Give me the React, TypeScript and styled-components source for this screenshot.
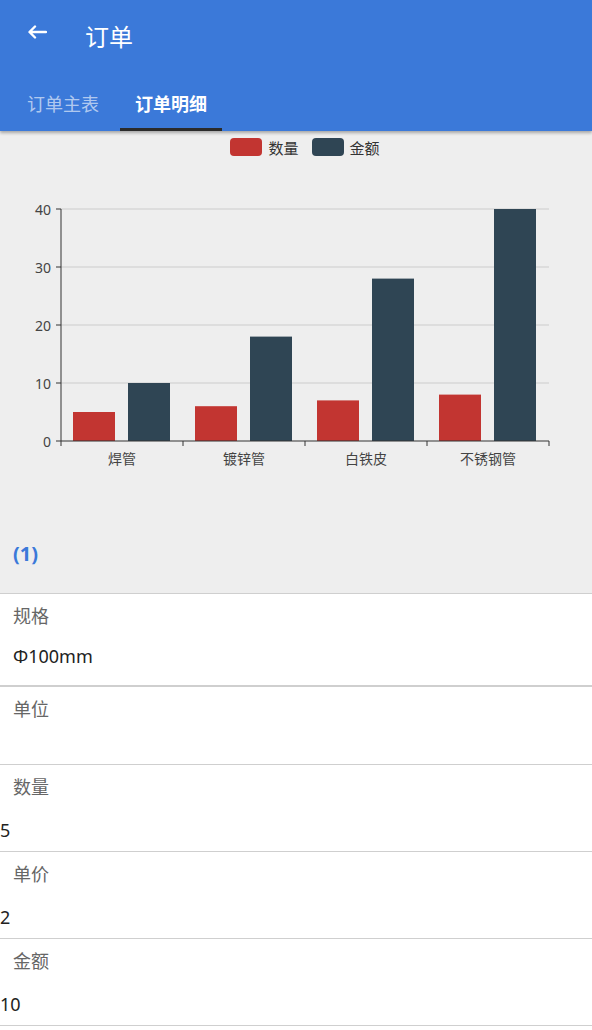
import React from 'react';
import styled, { createGlobalStyle } from 'styled-components';

const GlobalStyle = createGlobalStyle`
  html, body {
    margin: 0;
    padding: 0;
    background: #ffffff;
  }
  body {
    font-family: 'Noto Sans', 'Noto Sans CJK SC', sans-serif;
    color: #222;
  }
`;

const Page = styled.div`
  width: 592px;
  min-height: 1030px;
  background: #ffffff;
`;

const Header = styled.header`
  background: #3b79d9;
  box-shadow: 0 2px 3px rgba(0, 0, 0, 0.3);
  position: relative;
  z-index: 1;
`;

const TopBar = styled.div`
  height: 74px;
  display: flex;
  align-items: center;
  padding-left: 27px;
  gap: 38px;
`;

const BackButton = styled.button`
  border: none;
  background: none;
  padding: 0;
  width: 20px;
  height: 14px;
  margin-bottom: 10px;
  display: flex;
  align-items: center;
  cursor: pointer;
`;

const Title = styled.h1`
  margin: 0;
  font-size: 24px;
  font-weight: 400;
  color: #ffffff;
  line-height: 30px;
`;

const TabBar = styled.nav`
  height: 57px;
  display: flex;
  padding-left: 12px;
  gap: 6px;
`;

const Tab = styled.div<{ $active?: boolean }>`
  height: 57px;
  padding: 3px 15px 0;
  display: flex;
  align-items: center;
  box-sizing: border-box;
  font-size: 18px;
  font-weight: ${(p) => (p.$active ? 700 : 400)};
  color: ${(p) => (p.$active ? '#ffffff' : 'rgba(255, 255, 255, 0.62)')};
  border-bottom: 3px solid ${(p) => (p.$active ? '#2b2b2b' : 'transparent')};
`;

const ChartSection = styled.section`
  background: #eeeeee;
  border-bottom: 1px solid #cfcfcf;
`;

const Legend = styled.div`
  display: flex;
  justify-content: center;
  align-items: center;
  gap: 13px;
  padding: 6px 0 0 18px;
  height: 20px;
`;

const LegendItem = styled.div`
  display: flex;
  align-items: center;
  gap: 6px;
  font-size: 15px;
  color: #333;
`;

const Swatch = styled.span<{ $color: string }>`
  width: 32px;
  height: 18px;
  border-radius: 4px;
  background: ${(p) => p.$color};
`;

const ChartSvg = styled.svg`
  display: block;
`;

const Caption = styled.div`
  padding: 52px 13px 27px;
  font-size: 20px;
  line-height: 24px;
  font-weight: 700;
  color: #3b79d9;
`;

const Field = styled.div<{ $height: number; $thick?: boolean }>`
  height: ${(p) => p.$height}px;
  border-bottom: ${(p) => (p.$thick ? 2 : 1)}px solid #cfcfcf;
`;

const FieldLabel = styled.div`
  padding: 9px 13px 0;
  font-size: 18px;
  line-height: 26px;
  color: #666;
`;

const FieldValue = styled.div<{ $indent?: boolean; $gap: number }>`
  margin-top: ${(p) => p.$gap}px;
  padding-left: ${(p) => (p.$indent ? 13 : 0)}px;
  font-size: 18px;
  line-height: 26px;
  color: #222;
`;

const RED = '#c23531';
const DARK = '#2f4554';

const categories = ['焊管', '镀锌管', '白铁皮', '不锈钢管'];
const qty = [5, 6, 7, 8];
const amount = [10, 18, 28, 40];

const X0 = 61;
const X1 = 549;
const Y0 = 284;
const UNIT = 5.8;
const CAT = 122;

const BarChart = () => (
  <ChartSvg width={592} height={333} viewBox="0 0 592 333">
    {[10, 20, 30, 40].map((v) => (
      <line key={v} x1={X0} x2={X1} y1={Y0 - v * UNIT} y2={Y0 - v * UNIT} stroke="#cccccc" strokeWidth={1} />
    ))}
    {[0, 10, 20, 30, 40].map((v) => (
      <g key={v}>
        <line x1={X0 - 5} x2={X0} y1={Y0 - v * UNIT} y2={Y0 - v * UNIT} stroke="#333" strokeWidth={1} />
        <text
          x={51}
          y={Y0 - v * UNIT}
          textAnchor="end"
          dominantBaseline="central"
          fontSize={14}
          fill="#444"
          fontFamily="'Noto Sans', 'Noto Sans CJK SC', sans-serif"
        >
          {v}
        </text>
      </g>
    ))}
    {categories.map((c, i) => {
      const start = X0 + CAT * i;
      return (
        <g key={c}>
          <rect x={start + 12} y={Y0 - qty[i] * UNIT} width={42} height={qty[i] * UNIT} fill={RED} />
          <rect x={start + 67} y={Y0 - amount[i] * UNIT} width={42} height={amount[i] * UNIT} fill={DARK} />
          <text
            x={start + CAT / 2}
            y={301}
            textAnchor="middle"
            dominantBaseline="central"
            fontSize={14}
            fill="#444"
            fontFamily="'Noto Sans', 'Noto Sans CJK SC', sans-serif"
          >
            {c}
          </text>
        </g>
      );
    })}
    {[0, 1, 2, 3, 4].map((i) => (
      <line key={i} x1={X0 + CAT * i} x2={X0 + CAT * i} y1={Y0} y2={Y0 + 5} stroke="#333" strokeWidth={1} />
    ))}
    <line x1={X0} x2={X0} y1={Y0 - 40 * UNIT} y2={Y0} stroke="#333" strokeWidth={1} />
    <line x1={X0} x2={X1} y1={Y0} y2={Y0} stroke="#333" strokeWidth={1} />
  </ChartSvg>
);

const App = () => {
  return (
    <Page>
      <GlobalStyle />
      <Header>
        <TopBar>
          <BackButton aria-label="back">
            <svg width="20" height="14" viewBox="0 0 20 14">
              <path d="M19 7H3M8 1.5L2.5 7L8 12.5" fill="none" stroke="#fff" strokeWidth="2.4" strokeLinecap="round" strokeLinejoin="round" />
            </svg>
          </BackButton>
          <Title>订单</Title>
        </TopBar>
        <TabBar>
          <Tab>订单主表</Tab>
          <Tab $active>订单明细</Tab>
        </TabBar>
      </Header>

      <ChartSection>
        <Legend>
          <LegendItem>
            <Swatch $color={RED} />
            数量
          </LegendItem>
          <LegendItem>
            <Swatch $color={DARK} />
            金额
          </LegendItem>
        </Legend>
        <BarChart />
        <Caption>(1)</Caption>
      </ChartSection>

      <Field $height={91} $thick>
        <FieldLabel>规格</FieldLabel>
        <FieldValue $indent $gap={14}>Φ100mm</FieldValue>
      </Field>
      <Field $height={77}>
        <FieldLabel>单位</FieldLabel>
      </Field>
      <Field $height={86}>
        <FieldLabel>数量</FieldLabel>
        <FieldValue $gap={17}>5</FieldValue>
      </Field>
      <Field $height={86}>
        <FieldLabel>单价</FieldLabel>
        <FieldValue $gap={17}>2</FieldValue>
      </Field>
      <Field $height={86}>
        <FieldLabel>金额</FieldLabel>
        <FieldValue $gap={17}>10</FieldValue>
      </Field>
    </Page>
  );
};

export default App;
